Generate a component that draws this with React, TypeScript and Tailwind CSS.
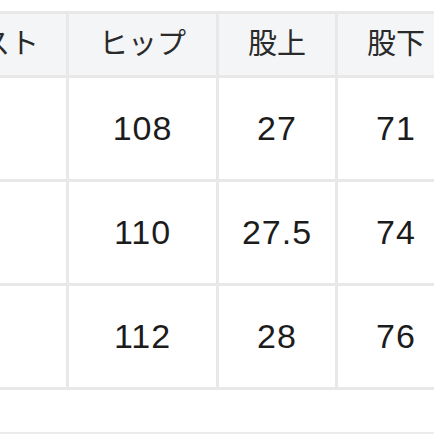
const header = ["ウエスト", "ヒップ", "股上", "股下"];
const rows = [
  ["78", "108", "27", "71"],
  ["82", "110", "27.5", "74"],
  ["86", "112", "28", "76"],
];

const colWidths = ["w-[170px]", "w-[147px]", "w-[116px]", "w-[116px]"];

export default function App() {
  return (
    <div
      className="w-[434px] h-[434px] overflow-hidden bg-white pt-[11px] flex flex-col"
      style={{ fontFamily: '"Noto Sans CJK JP", "Liberation Sans", sans-serif' }}
    >
      <div className="ml-[-107px] flex flex-col gap-[3px] bg-[#e8e8e8] p-[3px] w-max">
        <div className="flex gap-[3px]">
          {header.map((h, i) => (
            <div
              key={h}
              className={`${colWidths[i]} h-[61px] pb-[5px] bg-[#f4f5f7] flex items-center justify-center text-[29px] text-[#2a2a2a]`}
            >
              {h}
            </div>
          ))}
        </div>
        {rows.map((r, ri) => (
          <div key={ri} className="flex gap-[3px]">
            {r.map((v, i) => (
              <div
                key={i}
                className={`${colWidths[i]} h-[101px] bg-white flex items-center justify-center text-[34px] tracking-[1px] text-[#1c1c1c] font-['Liberation_Sans',sans-serif]`}
              >
                {v}
              </div>
            ))}
          </div>
        ))}
      </div>
      <div className="mt-[42px] h-[2px] w-full bg-[#ececec]" />
    </div>
  );
}
